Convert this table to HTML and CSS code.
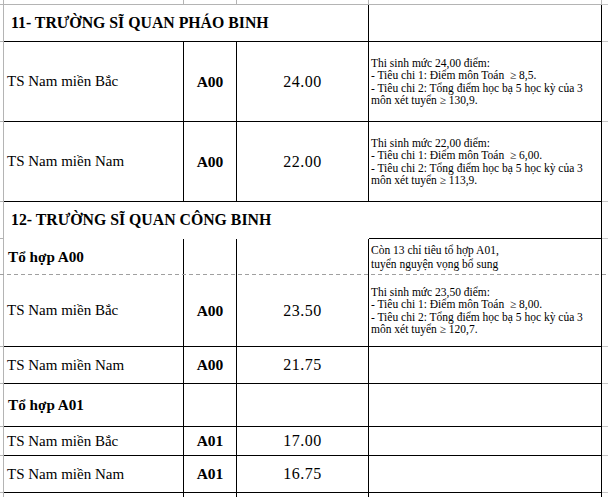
FILE: index.html
```html
<!DOCTYPE html>
<html lang="vi">
<head>
<meta charset="utf-8">
<title>Điểm chuẩn</title>
<link rel="stylesheet" href="styles.css">
</head>
<body>
<div class="sheet">
  <!-- row 0: gridlines above the table -->
  <div class="out"></div><div class="out"></div><div class="out"></div><div class="out"></div><div class="out"></div><div class="out-r"></div>

  <!-- row 1 -->
  <div class="out"></div>
  <div class="cell head span3">11- TRƯỜNG SĨ QUAN PHÁO BINH</div>
  <div class="cell"></div>
  <div class="out-r"></div>

  <!-- row 2 -->
  <div class="out"></div>
  <div class="cell name">TS Nam miền Bắc</div>
  <div class="cell code">A00</div>
  <div class="cell score">24.00</div>
  <div class="cell note">Thi sinh mức 24,00 điểm:<br>- Tiêu chi 1: Điểm môn Toán &nbsp;≥ 8,5.<br>- Tiêu chi 2: Tổng điểm học bạ 5 học kỳ của 3<br>môn xét tuyển ≥ 130,9.</div>
  <div class="out-r"></div>

  <!-- row 3 -->
  <div class="out"></div>
  <div class="cell name">TS Nam miền Nam</div>
  <div class="cell code">A00</div>
  <div class="cell score">22.00</div>
  <div class="cell note">Thi sinh mức 22,00 điểm:<br>- Tiêu chi 1: Điểm môn Toán &nbsp;≥ 6,00.<br>- Tiêu chi 2: Tổng điểm học bạ 5 học kỳ của 3<br>môn xét tuyển ≥ 113,9.</div>
  <div class="out-r"></div>

  <!-- row 4 -->
  <div class="out"></div>
  <div class="cell head span3 open">12- TRƯỜNG SĨ QUAN CÔNG BINH</div>
  <div class="cell"></div>
  <div class="out-r"></div>

  <!-- row 5 -->
  <div class="out nb"></div>
  <div class="cell group nb">Tổ hợp A00</div>
  <div class="cell nb"></div>
  <div class="cell nb"></div>
  <div class="cell note note-wide nb">Còn 13 chỉ tiêu tổ hợp A01,<br>tuyển nguyện vọng bổ sung</div>
  <div class="out-r nb"></div>

  <!-- row 6 -->
  <div class="out"></div>
  <div class="cell name">TS Nam miền Bắc</div>
  <div class="cell code">A00</div>
  <div class="cell score">23.50</div>
  <div class="cell note">Thi sinh mức 23,50 điểm:<br>- Tiêu chi 1: Điểm môn Toán &nbsp;≥ 8,00.<br>- Tiêu chi 2: Tổng điểm học bạ 5 học kỳ của 3<br>môn xét tuyển ≥ 120,7.</div>
  <div class="out-r"></div>

  <!-- row 7 -->
  <div class="out"></div>
  <div class="cell name">TS Nam miền Nam</div>
  <div class="cell code">A00</div>
  <div class="cell score">21.75</div>
  <div class="cell"></div>
  <div class="out-r"></div>

  <!-- row 8 -->
  <div class="out"></div>
  <div class="cell group">Tổ hợp A01</div>
  <div class="cell"></div>
  <div class="cell"></div>
  <div class="cell"></div>
  <div class="out-r"></div>

  <!-- row 9 -->
  <div class="out"></div>
  <div class="cell name">TS Nam miền Bắc</div>
  <div class="cell code">A01</div>
  <div class="cell score">17.00</div>
  <div class="cell"></div>
  <div class="out-r"></div>

  <!-- row 10 -->
  <div class="out"></div>
  <div class="cell name">TS Nam miền Nam</div>
  <div class="cell code">A01</div>
  <div class="cell score">16.75</div>
  <div class="cell"></div>
  <div class="out-r"></div>

  <!-- row 11 -->
  <div class="out nb"></div>
  <div class="cell nb"></div>
  <div class="cell nb"></div>
  <div class="cell nb"></div>
  <div class="cell nb"></div>
  <div class="out-r nb"></div>

  <div class="page-break"></div>
</div>
</body>
</html>
```

FILE: styles.css
```css
* { box-sizing: border-box; }

html, body {
  margin: 0;
  padding: 0;
  background: #ffffff;
}

.sheet {
  position: relative;
  width: 608px;
  height: 497px;
  overflow: hidden;
  display: grid;
  grid-template-columns: 4px 180px 53px 132px 233px 1fr;
  grid-template-rows: 5px 37px 80px 80px 37px 36px 72px 37px 43px 29px 37px 1fr;
  font-family: "Liberation Serif", "Times New Roman", serif;
  color: #000000;
  background: #ffffff;
}

.out {
  border-right: 1px solid #b4b4b4;
  border-bottom: 1px solid #b4b4b4;
}

.out-r {
  border-bottom: 1px solid #c8c8c8;
}

.cell {
  display: flex;
  align-items: center;
  border-right: 1px solid #000000;
  border-bottom: 1px solid #000000;
  white-space: nowrap;
  overflow: hidden;
}

.nb { border-bottom: none; }

.span3 { grid-column: span 3; }

.open {
  border-right-color: transparent;
  border-bottom-color: transparent;
}

.head {
  font-weight: bold;
  font-size: 15.8px;
  padding-left: 7px;
}

.name {
  font-size: 15px;
  padding-left: 3px;
}

.code {
  font-weight: bold;
  font-size: 15.5px;
  justify-content: center;
}

.score {
  font-size: 16px;
  letter-spacing: 0.5px;
  justify-content: center;
}

.group {
  font-weight: bold;
  font-size: 15.2px;
  padding-left: 4px;
}

.note {
  font-size: 11.5px;
  line-height: 12.5px;
  padding-left: 2px;
}

.note-wide {
  line-height: 14px;
}

.page-break {
  position: absolute;
  left: 0;
  top: 274px;
  width: 608px;
  height: 1px;
  background: repeating-linear-gradient(90deg, #a0a0a0 0 4px, transparent 4px 7px);
}
```
